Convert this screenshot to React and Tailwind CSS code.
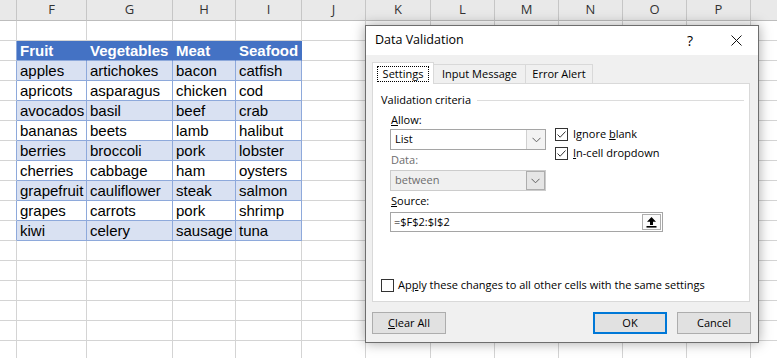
import React from "react";

const COLS = [
  { l: "", w: 17 },
  { l: "F", w: 70 },
  { l: "G", w: 86 },
  { l: "H", w: 63 },
  { l: "I", w: 66 },
  { l: "J", w: 64 },
  { l: "K", w: 65 },
  { l: "L", w: 64 },
  { l: "M", w: 64 },
  { l: "N", w: 64 },
  { l: "O", w: 64 },
  { l: "P", w: 64 },
  { l: "", w: 64 },
];

const TABLE = [
  ["Fruit", "Vegetables", "Meat", "Seafood"],
  ["apples", "artichokes", "bacon", "catfish"],
  ["apricots", "asparagus", "chicken", "cod"],
  ["avocados", "basil", "beef", "crab"],
  ["bananas", "beets", "lamb", "halibut"],
  ["berries", "broccoli", "pork", "lobster"],
  ["cherries", "cabbage", "ham", "oysters"],
  ["grapefruit", "cauliflower", "steak", "salmon"],
  ["grapes", "carrots", "pork", "shrimp"],
  ["kiwi", "celery", "sausage", "tuna"],
];

function Cell({ r, c, w }) {
  const t = r - 1;
  const inRows = t >= 0 && t < TABLE.length;
  const inTable = inRows && c >= 1 && c <= 4;
  const isHead = t === 0;

  let cls = "border-[#d4d4d4] bg-white";
  if (inTable && isHead) {
    cls = "border-r-[#4472c4] border-b-[#8ea9db] bg-[#4472c4] text-white font-bold";
  } else if (inTable) {
    cls = `border-[#8ea9db] text-black ${t % 2 === 1 ? "bg-[#d9e1f2]" : "bg-white"}`;
  } else if (inRows && c === 0) {
    cls = "border-b-[#d4d4d4] border-r-[#8ea9db] bg-white";
  }

  return (
    <div
      className={`h-[20px] shrink-0 overflow-hidden whitespace-nowrap border-r border-b pl-[3px] text-[15px] leading-[19px] ${cls}`}
      style={{ width: w }}
    >
      {inTable ? TABLE[t][c - 1] : ""}
    </div>
  );
}

function Check({ checked }) {
  return (
    <span className="flex h-[13px] w-[13px] shrink-0 items-center justify-center border border-[#333] bg-white">
      {checked && (
        <svg width="11" height="11" viewBox="0 0 11 11">
          <path d="M1.5 5.5 L4.2 8.2 L9.5 2.5" fill="none" stroke="#333" strokeWidth="1" />
        </svg>
      )}
    </span>
  );
}

function Chevron() {
  return (
    <svg width="9" height="6" viewBox="0 0 9 6">
      <path d="M0.5 0.8 L4.5 4.8 L8.5 0.8" fill="none" stroke="#606060" strokeWidth="1" />
    </svg>
  );
}

function Dialog() {
  return (
    <div className="absolute left-[365px] top-[25px] flex h-[318px] w-[394px] flex-col border border-[#6e6e6e] bg-[#f0f0f0] font-['Open_Sans',sans-serif] text-[11px] text-black shadow-[0_0_12px_rgba(0,0,0,0.35)]">
      <div className="flex h-[29px] items-center bg-white pl-[9px]">
        <span className="text-[12.5px]">Data Validation</span>
        <span className="ml-auto text-[14px]">?</span>
        <svg className="ml-[38px] mr-[16px]" width="11" height="11" viewBox="0 0 11 11">
          <path d="M0.5 0.5 L10.5 10.5 M10.5 0.5 L0.5 10.5" stroke="#111" strokeWidth="1" />
        </svg>
      </div>

      <div className="px-[6px] pt-[7px]">
        <div className="flex h-[21px] items-end">
          <div className="relative z-10 -mb-px flex h-[22px] w-[62px] items-start justify-center border border-b-0 border-[#d9d9d9] bg-white pt-[4px]">
            <span className="px-[5px] leading-[14px] outline-1 outline-dotted outline-black">Settings</span>
          </div>
          <div className="flex h-[19px] w-[92px] items-center justify-center border-t border-r border-[#d9d9d9] bg-[#f0f0f0] pt-px">
            Input Message
          </div>
          <div className="flex h-[19px] w-[67px] items-center justify-center border-t border-r border-[#d9d9d9] bg-[#f0f0f0] pt-px">
            Error Alert
          </div>
        </div>

        <div className="flex h-[219px] w-[378px] flex-col border border-[#d9d9d9] bg-white pl-[8px]">
          <div className="mt-[8px] flex h-[16px] items-center">
            <span>Validation criteria</span>
            <span className="ml-[6px] mr-[5px] h-px flex-1 bg-[#dcdcdc]" />
          </div>

          <div className="ml-[9px]">
            <div className="flex">
              <div className="w-[156px]">
                <div className="mt-[4px] h-[16px] pl-px leading-[16px]">
                  <u>A</u>llow:
                </div>
                <div className="mt-px flex h-[21px] items-center border border-[#a5a5a5] bg-white">
                  <span className="flex-1 pl-[4px]">List</span>
                  <span className="flex h-full w-[19px] items-center justify-center border-l border-[#d0d0d0] bg-[#f3f3f3]">
                    <Chevron />
                  </span>
                </div>
                <div className="mt-[2px] h-[16px] pl-px leading-[16px] text-[#6d6d6d]">Data:</div>
                <div className="mt-[2px] flex h-[21px] items-center border border-[#cccccc] bg-[#f0f0f0] text-[#6d6d6d]">
                  <span className="flex-1 pl-[4px]">between</span>
                  <span className="flex h-full w-[19px] items-center justify-center border border-[#adadad] bg-[#e5e5e5]">
                    <Chevron />
                  </span>
                </div>
              </div>
              <div className="ml-[9px] pt-[20px]">
                <div className="flex h-[13px] items-center gap-[5px]">
                  <Check checked />
                  <span>
                    Ignore <u>b</u>lank
                  </span>
                </div>
                <div className="mt-[6px] flex h-[13px] items-center gap-[5px]">
                  <Check checked />
                  <span>
                    <u>I</u>n-cell dropdown
                  </span>
                </div>
              </div>
            </div>

            <div className="mt-[2px] h-[16px] pl-px leading-[16px]">
              <u>S</u>ource:
            </div>
            <div className="mt-[3px] flex h-[20px] w-[273px] items-center border border-[#a5a5a5] bg-white">
              <span className="flex-1 pl-[3px]">=$F$2:$I$2</span>
              <span className="mr-px flex h-[16px] w-[19px] items-center justify-center border border-[#adadad] bg-[#fbfbfb]">
                <svg width="11" height="12" viewBox="0 0 11 12">
                  <path d="M5.5 1 L10 5.8 H7 V9 H4 V5.8 H1 Z" fill="#000" />
                  <rect x="0.5" y="10" width="10" height="1.6" fill="#000" />
                </svg>
              </span>
            </div>
          </div>

          <div className="mb-[9px] mt-auto flex h-[13px] items-center gap-[4px]">
            <Check />
            <span>
              Ap<u>p</u>ly these changes to all other cells with the same settings
            </span>
          </div>
        </div>

        <div className="mt-[10px] flex w-[379px]">
          <button className="flex h-[22px] w-[74px] items-center justify-center border border-[#adadad] bg-[#e1e1e1]">
            <span>
              <u>C</u>lear All
            </span>
          </button>
          <button className="ml-auto flex h-[22px] w-[74px] items-center justify-center border-2 border-[#0078d7] bg-[#e1e1e1]">
            OK
          </button>
          <button className="ml-[10px] flex h-[22px] w-[74px] items-center justify-center border border-[#adadad] bg-[#e1e1e1]">
            Cancel
          </button>
        </div>
      </div>
    </div>
  );
}

export default function App() {
  const rows = Array.from({ length: 17 }, (_, i) => i);
  return (
    <div className="relative h-[358px] w-[777px] overflow-hidden bg-white font-['Liberation_Sans',Arial,sans-serif]">
      <div className="flex h-[21px] bg-[#e9e9e9]">
        {COLS.map((col, i) => (
          <div
            key={i}
            className="flex h-[21px] shrink-0 items-center justify-center border-r border-b border-r-[#c6c6c6] border-b-[#bdbdbd] font-['Open_Sans',sans-serif] text-[13px] text-[#333]"
            style={{ width: col.w }}
          >
            {col.l}
          </div>
        ))}
      </div>
      {rows.map((r) => (
        <div key={r} className="flex">
          {COLS.map((col, c) => (
            <Cell key={c} r={r} c={c} w={col.w} />
          ))}
        </div>
      ))}
      <Dialog />
    </div>
  );
}
